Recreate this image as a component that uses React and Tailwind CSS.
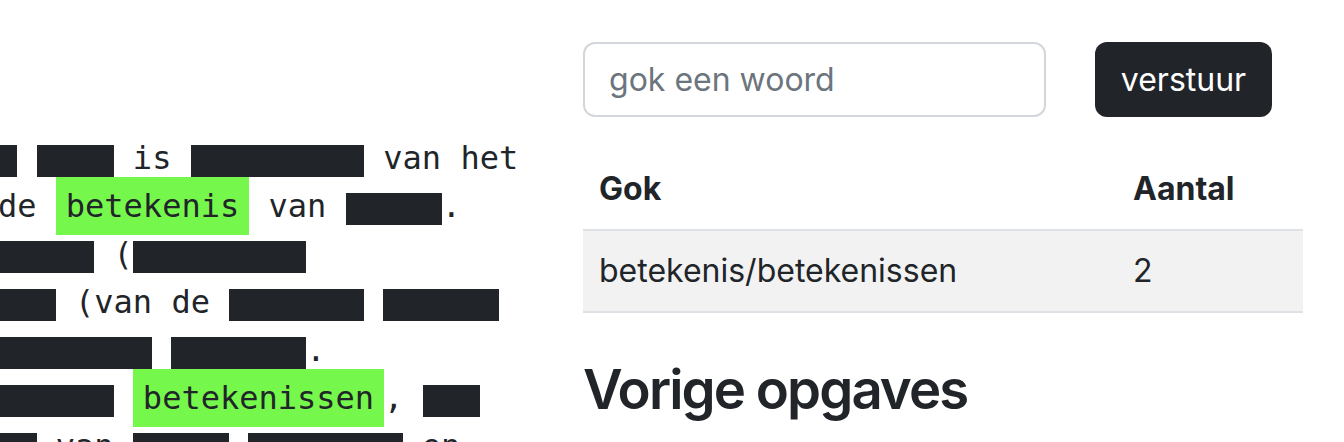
import React from "react";

const W = {
  1: "w-[1ch]",
  2: "w-[2ch]",
  3: "w-[3ch]",
  4: "w-[4ch]",
  5: "w-[5ch]",
  6: "w-[6ch]",
  7: "w-[7ch]",
  8: "w-[8ch]",
  9: "w-[9ch]",
};

function B({ n }) {
  return <span className={"inline-block h-[32px] align-[-8px] bg-[#212529] " + W[n]} />;
}

function G({ children }) {
  return <span className="bg-[#76f74c] px-[10px] py-[10px]">{children}</span>;
}

function Line({ children }) {
  return <div className="whitespace-pre -ml-[2px]">{children}</div>;
}

export default function App() {
  return (
    <div className="flex w-[1344px] h-[442px] overflow-hidden bg-white text-[#212529]">
      <div
        className="w-[583px] shrink-0 overflow-hidden pt-[134px] text-[32px] leading-[48px]"
        style={{ fontFamily: '"DejaVu Sans Mono", monospace' }}
      >
        <Line>
          <B n={1} /> <B n={4} /> is <B n={9} /> van het
        </Line>
        <Line>
          de <G>betekenis</G> van <B n={5} />.
        </Line>
        <Line>
          <B n={5} /> (<B n={9} />
        </Line>
        <Line>
          <B n={3} /> (van de <B n={7} /> <B n={6} />
        </Line>
        <Line>
          <B n={8} /> <B n={7} />.
        </Line>
        <Line>
          <B n={6} /> <G>betekenissen</G>, <B n={3} />
        </Line>
        <Line>
          <B n={2} /> van <B n={5} /> <B n={8} /> en
        </Line>
      </div>
      <div
        className="w-[720px] shrink-0 pt-[42px]"
        style={{ fontFamily: 'Inter, "Liberation Sans", sans-serif' }}
      >
        <div className="flex items-center">
          <input
            type="text"
            placeholder="gok een woord"
            className="w-[463px] h-[75px] border-2 border-[#d3d7db] rounded-[12px] px-[24px] text-[32px] text-[#212529] placeholder:text-[#6c757d] outline-none bg-white"
          />
          <button className="ml-[49px] w-[177px] h-[75px] rounded-[12px] bg-[#212529] text-white text-[32px] leading-[48px]">
            verstuur
          </button>
        </div>
        <table className="mt-[32px] w-[720px] border-collapse text-[32px] leading-[48px]">
          <thead>
            <tr className="border-b-2 border-[#dee2e6]">
              <th className="w-[534px] p-[16px] text-left font-bold">Gok</th>
              <th className="p-[16px] text-left font-bold">Aantal</th>
            </tr>
          </thead>
          <tbody>
            <tr className="border-b-2 border-[#dee2e6] bg-[#f2f2f2]">
              <td className="p-[16px]">betekenis/betekenissen</td>
              <td className="p-[16px]">2</td>
            </tr>
          </tbody>
        </table>
        <h2 className="mt-[44px] text-[54.5px] leading-[1.2] font-semibold tracking-[-0.035em]">
          Vorige opgaves
        </h2>
      </div>
    </div>
  );
}
